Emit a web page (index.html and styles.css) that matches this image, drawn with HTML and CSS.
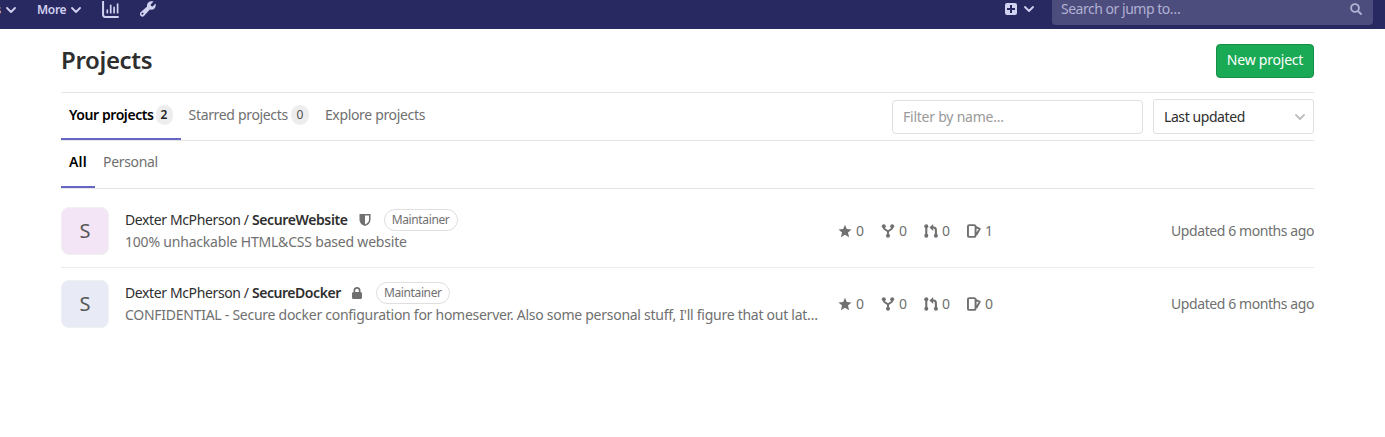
FILE: index.html
```html
<!DOCTYPE html>
<html lang="en">
<head>
<meta charset="utf-8">
<title>Projects</title>
<link rel="stylesheet" href="styles.css">
</head>
<body>
<svg class="defs" width="0" height="0">
  <symbol id="chevron" viewBox="0 0 10 6"><path d="M1 1l4 4 4-4" fill="none" stroke="currentColor" stroke-width="1.8" stroke-linecap="round" stroke-linejoin="round"/></symbol>
  <symbol id="star" viewBox="0 0 16 16"><path d="M8 .8l2.100 4.900 5.400.5-4.100 3.500 1.300 5.300L8 12.200 3.300 15l1.300-5.300L.5 6.200l5.400-.5z"/></symbol>
  <symbol id="fork" viewBox="0 0 16 16"><g fill="none" stroke="currentColor" stroke-width="2.200"><path d="M3.200 3v1.200C3.200 7 8 6.500 8 9.500V13M12.800 3v1.200C12.800 7 8 6.500 8 9.500"/></g><circle cx="3.200" cy="2.600" r="2.300"/><circle cx="12.800" cy="2.600" r="2.300"/><circle cx="8" cy="13.400" r="2.300"/></symbol>
  <symbol id="merge" viewBox="0 0 16 16"><g fill="none" stroke="currentColor" stroke-width="2.400"><path d="M2.600 2.500v11M9 4h2c1.800 0 2.600 1.200 2.600 3v6.500"/></g><path d="M10.500 0v8L6.200 4z"/><circle cx="2.600" cy="2.600" r="2.300"/><circle cx="2.600" cy="13.400" r="2.300"/><circle cx="13.600" cy="13.400" r="2.300"/></symbol>
  <symbol id="issues" viewBox="0 0 16 16"><g fill="none" stroke="currentColor" stroke-width="2.200" stroke-linejoin="round"><path d="M2.500 1.300h5.500q1.800 0 1.800 1.800v9.800q0 1.800-1.800 1.800H2.500q-1.400 0-1.400-1.400V2.700q0-1.400 1.400-1.400zM10 3.300l4.600 2.200L10.600 12.500"/></g></symbol>
</svg>

<header class="navbar">
  <div class="nav-left">
    <span class="nav-link projects-link">Projects <svg class="chev"><use href="#chevron"/></svg></span>
    <span class="nav-link more-link">More <svg class="chev"><use href="#chevron"/></svg></span>
    <svg class="chart" viewBox="0 0 16 16"><g fill="none" stroke="currentColor" stroke-width="1.900" stroke-linecap="round" stroke-linejoin="round"><path d="M1 0v13q0 2 2 2h12"/><path d="M5 8.500v2.500M8.200 4v7M11.400 6v5M14.700 3v8" stroke-width="1.600"/></g></svg>
    <svg class="wrench" viewBox="0 0 16 16"><path fill-rule="evenodd" d="M13.500.6L10.700 3.400l.4 1.600 1.600.4 2.800-2.800c1 3.200-1.200 6.100-4.100 6.100l-1.500-.2-5.700 6.300a2.500 2.500 0 0 1-3.600-3.500l6.500-5.700C6.200 2.100 9.800-.8 13.500.6zM3.300 12a1 1 0 1 0-1.400 1.400A1 1 0 0 0 3.300 12z"/></svg>
  </div>
  <div class="nav-right">
    <svg class="plus" viewBox="0 0 12 12"><path fill-rule="evenodd" d="M2 0h8q2 0 2 2v8q0 2-2 2H2q-2 0-2-2V2q0-2 2-2zm3 2v3H2v2h3v3h2V7h3V5H7V2z"/></svg>
    <svg class="chev"><use href="#chevron"/></svg>
    <div class="search"><span>Search or jump to…</span><svg class="glass" viewBox="0 0 12 12"><g fill="none" stroke="currentColor" stroke-width="1.900" stroke-linecap="round"><circle cx="5" cy="5" r="3.900"/><path d="M8 8l3 3"/></g></svg></div>
  </div>
</header>

<main class="content">
  <div class="title-row"><h1>Projects</h1><button class="new-project">New project</button></div>
  <div class="top-area">
    <nav class="tabs">
      <a class="tab active">Your projects<span class="badge">2</span></a>
      <a class="tab">Starred projects<span class="badge">0</span></a>
      <a class="tab">Explore projects</a>
    </nav>
    <div class="controls">
      <div class="filter">Filter by name...</div>
      <div class="sort">Last updated<svg class="chev"><use href="#chevron"/></svg></div>
    </div>
  </div>
  <nav class="tabs sub-tabs"><a class="tab active">All</a><a class="tab">Personal</a></nav>

  <section class="project first">
    <div class="avatar avatar-pink">S</div>
    <div class="details">
      <div class="name"><span>Dexter McPherson / <b>SecureWebsite</b></span><svg class="visibility" viewBox="0 0 12 12"><path fill-rule="evenodd" d="M.5 0h11v5.500C11.500 9 9 11 6 12 3 11 .5 9 .5 5.500zM6 1.600v8.800C8.500 9.500 10 8 10 5.500V1.600z"/></svg><span class="role">Maintainer</span></div>
      <p>100% unhackable HTML&amp;CSS based website</p>
    </div>
    <div class="stats">
      <span class="stat"><svg><use href="#star"/></svg>0</span>
      <span class="stat"><svg><use href="#fork"/></svg>0</span>
      <span class="stat"><svg><use href="#merge"/></svg>0</span>
      <span class="stat"><svg><use href="#issues"/></svg>1</span>
    </div>
    <time>Updated 6 months ago</time>
  </section>
  <section class="project second">
    <div class="avatar avatar-blue">S</div>
    <div class="details">
      <div class="name"><span>Dexter McPherson / <b>SecureDocker</b></span><svg class="visibility" viewBox="0 0 12 12"><path fill-rule="evenodd" d="M2.500 5V3.500a3.500 3.500 0 0 1 7 0V5q1.500 0 1.500 1.500v4q0 1.500-1.500 1.500h-7Q1 12 1 10.500v-4Q1 5 2.500 5zM4.200 5h3.600V3.500a1.800 1.800 0 0 0-3.600 0z"/></svg><span class="role">Maintainer</span></div>
      <p class="long">CONFIDENTIAL - Secure docker configuration for homeserver. Also some personal stuff, I'll figure that out lat…</p>
    </div>
    <div class="stats">
      <span class="stat"><svg><use href="#star"/></svg>0</span>
      <span class="stat"><svg><use href="#fork"/></svg>0</span>
      <span class="stat"><svg><use href="#merge"/></svg>0</span>
      <span class="stat"><svg><use href="#issues"/></svg>0</span>
    </div>
    <time>Updated 6 months ago</time>
  </section>
</main>
</body>
</html>
```
FILE: styles.css
```css
* { box-sizing: border-box; }
body { margin: 0; background: #fff; color: #2e2e2e; font: 14px/20px "Noto Sans", sans-serif; overflow: hidden; }
svg { display: block; flex: none; fill: currentColor; }
.defs { position: absolute; }
.chev { width: 10px; height: 6px; }
.navbar { height: 29px; background: #292961; color: #d1d1f0; display: flex; justify-content: space-between; overflow: hidden; }
.nav-left, .nav-right { display: flex; height: 18px; align-items: center; }
.nav-link { display: flex; align-items: center; gap: 5px; font-size: 12px; font-weight: 600; line-height: 18px; padding-top: 1px; letter-spacing: -0.3px; }
.projects-link { width: 16px; justify-content: flex-end; margin-right: 21px; white-space: nowrap; }
.more-link { width: 43px; justify-content: space-between; }
.chart { width: 17px; height: 17px; margin-left: 22px; }
.wrench { width: 16px; height: 16px; margin-left: 21px; }
.plus { width: 12px; height: 12px; margin-right: 7px; }
.search { width: 321px; height: 32px; margin: 0 12px 0 18px; padding: 0 11px 0 9px; border-radius: 4px; background: #4c4c7d; color: #b1b1d3; display: flex; justify-content: space-between; align-items: center; white-space: nowrap; letter-spacing: -0.48px; }
.glass { width: 12px; height: 12px; }
.content { width: 1253px; margin-left: 61px; }
.title-row { height: 64px; display: flex; justify-content: space-between; align-items: center; border-bottom: 1px solid #e5e5e5; }
h1 { margin: 0; font-size: 24px; line-height: 30px; font-weight: 600; letter-spacing: -0.35px; padding-bottom: 1px; }
.new-project { width: 98px; height: 34px; padding: 0 0 1px; border: 1px solid #168f48; border-radius: 4px; background: #1aaa55; color: #fff; font: inherit; letter-spacing: -0.22px; }
.top-area { height: 48px; display: flex; justify-content: space-between; border-bottom: 1px solid #e5e5e5; }
.tabs { display: flex; height: 47px; }
.tab { display: flex; height: 47px; padding: 12px 8px 12px; color: #707070; white-space: nowrap; border-bottom: 2px solid transparent; letter-spacing: -0.33px; }
.tab.active { color: #000; font-weight: 600; border-color: #6666c4; letter-spacing: -0.42px; }
.badge { width: 18px; height: 20px; margin-left: 3px; border-radius: 10px; background: #ededed; color: #4f4f4f; text-align: center; font-size: 12px; letter-spacing: 0; }
.active .badge { width: 17px; margin-left: 2px; color: #1f1f1f; }
.controls { display: flex; gap: 10px; padding-top: 6px; }
.filter, .sort { border: 1px solid #dfdfdf; border-radius: 4px; padding: 0 10px; display: flex; align-items: center; }
.filter { width: 251px; height: 34px; margin-top: 1px; color: #999; letter-spacing: -0.23px; }
.sort { width: 161px; height: 35px; justify-content: space-between; border-radius: 3px; padding-right: 8px; letter-spacing: -0.42px; }
.sort .chev { color: #bfbfbf; }
.sub-tabs { height: 48px; border-bottom: 1px solid #e5e5e5; }
.sub-tabs .tab { padding-top: 11px; }
.sub-tabs .tab.active { width: 34px; letter-spacing: 0.2px; }
.project { height: 72px; display: flex; align-items: center; }
.project.first { height: 79px; padding-top: 5px; border-bottom: 1px solid #ececec; }
.avatar { width: 48px; height: 48px; border: 1px solid #f0f0f0; border-radius: 8px; display: flex; align-items: center; justify-content: center; font-size: 20px; color: #555; }
.avatar.avatar-pink { background-color: #f3e5f5; }
.avatar.avatar-blue { background-color: #e8eaf6; }
.details { width: 694px; margin-left: 16px; }
.name { height: 22px; display: flex; align-items: center; white-space: nowrap; letter-spacing: -0.38px; }
.name b { font-weight: 600; }
.second b { letter-spacing: -0.45px; }
.visibility { width: 12px; height: 12px; margin: 0 13px 0 11px; color: #707070; }
.second .visibility { margin-left: 10px; }
.role { height: 22px; width: 74px; text-align: center; border: 1px solid #dfdfdf; border-radius: 11px; color: #707070; font-size: 12px; line-height: 20px; }
p { margin: 0; height: 22px; line-height: 22px; color: #707070; white-space: nowrap; letter-spacing: -0.2px; }
.long { letter-spacing: -0.266px; }
.stats { display: flex; margin-left: 19px; color: #707070; }
.stat { width: 43px; display: flex; align-items: center; gap: 4px; }
.stat svg { width: 14px; height: 14px; }
time { margin-left: auto; color: #707070; letter-spacing: -0.42px; }
```
